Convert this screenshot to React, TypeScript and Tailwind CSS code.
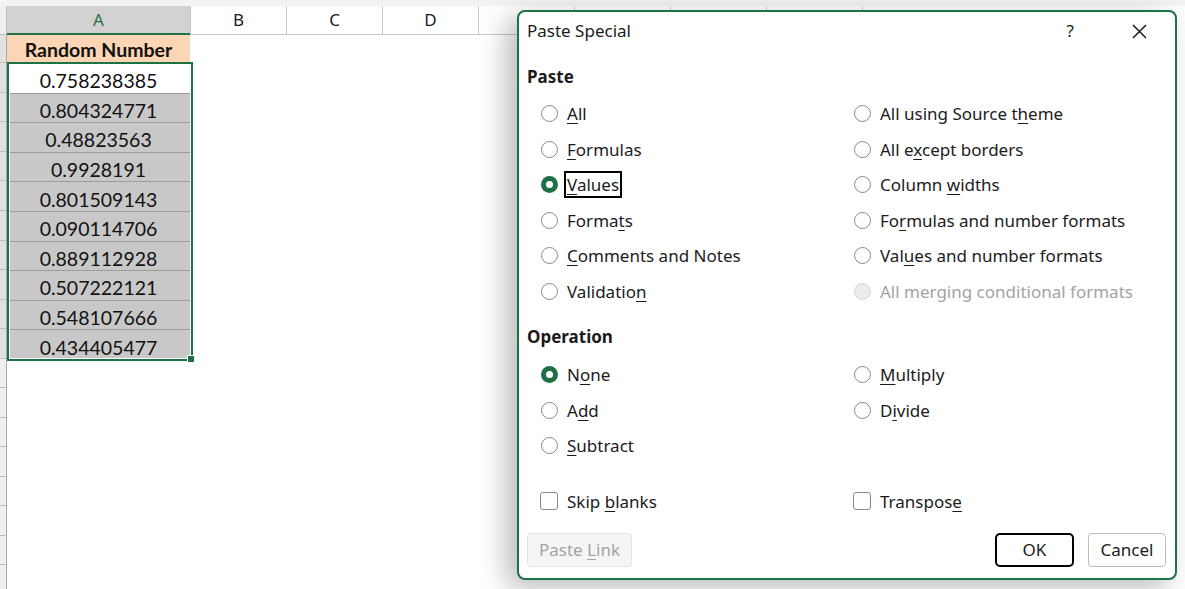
import React from 'react';

const values = [
  '0.758238385',
  '0.804324771',
  '0.48823563',
  '0.9928191',
  '0.801509143',
  '0.090114706',
  '0.889112928',
  '0.507222121',
  '0.548107666',
  '0.434405477',
];

interface Opt {
  label: string;
  at?: number;
  checked?: boolean;
  disabled?: boolean;
  focused?: boolean;
}

const pasteLeft: Opt[] = [
  { label: 'All', at: 0 },
  { label: 'Formulas', at: 0 },
  { label: 'Values', at: 0, checked: true, focused: true },
  { label: 'Formats', at: 5 },
  { label: 'Comments and Notes', at: 0 },
  { label: 'Validation', at: 9 },
];

const pasteRight: Opt[] = [
  { label: 'All using Source theme', at: 18 },
  { label: 'All except borders', at: 5 },
  { label: 'Column widths', at: 7 },
  { label: 'Formulas and number formats', at: 2 },
  { label: 'Values and number formats', at: 3 },
  { label: 'All merging conditional formats', disabled: true },
];

const opLeft: Opt[] = [
  { label: 'None', at: 1, checked: true },
  { label: 'Add', at: 1 },
  { label: 'Subtract', at: 0 },
];

const opRight: Opt[] = [
  { label: 'Multiply', at: 0 },
  { label: 'Divide', at: 1 },
];

// underline the access key letter, like a Windows dialog
function Accel({ text, at }: { text: string; at?: number }) {
  if (at === undefined) return <span>{text}</span>;
  return (
    <span className="whitespace-pre">
      {text.slice(0, at)}
      <span className="underline underline-offset-[3px] decoration-1">{text[at]}</span>
      {text.slice(at + 1)}
    </span>
  );
}

function Radio({ checked, disabled }: { checked?: boolean; disabled?: boolean }) {
  if (checked) {
    return (
      <span className="w-[17px] h-[17px] rounded-full bg-[#1e7145] flex items-center justify-center shrink-0">
        <span className="w-[7px] h-[7px] rounded-full bg-white" />
      </span>
    );
  }
  return (
    <span
      className={
        disabled
          ? 'w-[17px] h-[17px] rounded-full border border-[#d4d4d4] bg-[#ececec] shrink-0'
          : 'w-[17px] h-[17px] rounded-full border border-[#8a8a8a] bg-white shrink-0'
      }
    />
  );
}

function RadioRow({ opt }: { opt: Opt }) {
  return (
    <div className="flex items-center h-[35.5px] gap-[9px]">
      <Radio checked={opt.checked} disabled={opt.disabled} />
      <span
        className={
          (opt.disabled ? 'text-[#a3a3a3]' : 'text-[#1b1b1b]') +
          (opt.focused ? ' outline-2 outline-black px-[1px] leading-[23px] -ml-[1px]' : '')
        }
      >
        <Accel text={opt.label} at={opt.at} />
      </span>
    </div>
  );
}

function Check({ label, at }: { label: string; at: number }) {
  return (
    <div className="flex items-center h-[35.5px] gap-[9px] -ml-[1px]">
      <span className="w-[18px] h-[18px] rounded-[3px] border border-[#8a8a8a] bg-white" />
      <span className="text-[#1b1b1b]">
        <Accel text={label} at={at} />
      </span>
    </div>
  );
}

function Dialog() {
  return (
    <div className="absolute left-[517px] top-[10px] w-[660px] h-[570px] rounded-[8px] border-2 border-[#1e7145] bg-white shadow-[-10px_8px_28px_rgba(0,0,0,0.28)] font-['Noto_Sans',sans-serif] text-[17px] flex flex-col">
      <div className="flex items-center h-[38px] pl-[8px] pr-[28px] text-[#1b1b1b]">
        <span>Paste Special</span>
        <span className="ml-auto mr-[58px]">?</span>
        <svg width="15" height="15" viewBox="0 0 15 15" className="text-[#1b1b1b]">
          <path d="M1 1L14 14M14 1L1 14" stroke="currentColor" strokeWidth="1.5" />
        </svg>
      </div>

      <div className="mt-[12px] h-[30px] pl-[8px] flex items-center font-bold text-[#1b1b1b]">Paste</div>
      <div className="flex mt-[4px] pl-[22px]">
        <div className="w-[313px] flex flex-col">
          {pasteLeft.map((o) => (
            <RadioRow key={o.label} opt={o} />
          ))}
        </div>
        <div className="flex flex-col">
          {pasteRight.map((o) => (
            <RadioRow key={o.label} opt={o} />
          ))}
        </div>
      </div>

      <div className="mt-[13px] h-[30px] pl-[8px] flex items-center font-bold text-[#1b1b1b]">Operation</div>
      <div className="flex mt-[5px] pl-[22px]">
        <div className="w-[313px] flex flex-col">
          {opLeft.map((o) => (
            <RadioRow key={o.label} opt={o} />
          ))}
        </div>
        <div className="flex flex-col">
          {opRight.map((o) => (
            <RadioRow key={o.label} opt={o} />
          ))}
        </div>
      </div>

      <div className="flex mt-[20px] pl-[22px]">
        <div className="w-[313px]">
          <Check label="Skip blanks" at={5} />
        </div>
        <Check label="Transpose" at={8} />
      </div>

      <div className="flex items-center mt-[14px] pl-[8px] pr-[9px]">
        <div className="w-[105px] h-[34px] rounded-[4px] border border-[#e3e3e3] bg-[#f5f5f5] text-[#a3a3a3] flex items-center justify-center">
          <Accel text="Paste Link" at={6} />
        </div>
        <div className="ml-auto w-[79px] h-[34px] rounded-[5px] border-2 border-black bg-white text-[#1b1b1b] flex items-center justify-center">
          OK
        </div>
        <div className="ml-[14px] w-[78px] h-[34px] rounded-[4px] border border-[#bdbdbd] bg-white text-[#1b1b1b] flex items-center justify-center">
          Cancel
        </div>
      </div>
    </div>
  );
}

export default function App() {
  const extraRows = Array.from({ length: 8 });
  return (
    <div className="relative w-[1185px] h-[589px] overflow-hidden bg-white">
      <div className="h-[6px] bg-[#f3f3f3]" />

      {/* column headers */}
      <div className="flex h-[29px] font-['Noto_Sans',sans-serif] text-[17px] text-[#1b1b1b]">
        <div className="w-[7px] bg-[#f0f0f0] border-r border-b border-[#bdbdbd]" />
        <div className="w-[183px] bg-[#d2d2d2] border-b-2 border-[#1e7145] text-[#1e7145] flex items-center justify-center">
          A
        </div>
        {['B', 'C', 'D', '', '', '', '', ''].map((c, i) => (
          <div
            key={i}
            className="w-[96px] shrink-0 border-l border-b border-[#c8c8c8] flex items-center justify-center"
          >
            {c}
          </div>
        ))}
      </div>

      {/* grid body */}
      <div className="flex font-['Lato',sans-serif] text-[19.5px] text-[#111]">
        <div className="w-[7px] flex flex-col border-r border-[#a8a8a8]">
          <div className="h-[28px] bg-[#e2e2e2] border-b border-[#bdbdbd]" />
          {values.map((v) => (
            <div key={v} className="h-[29.6px] bg-[#e2e2e2] border-b border-[#bdbdbd]" />
          ))}
          {extraRows.map((_, i) => (
            <div key={i} className="h-[29.5px] bg-[#f0f0f0] border-b border-[#bdbdbd]" />
          ))}
        </div>
        <div className="w-[183px] flex flex-col">
          <div className="h-[28px] pt-[2px] bg-[#fcd5b4] font-bold flex items-center justify-center">Random Number</div>
          {values.map((v, i) => (
            <div
              key={v}
              className={
                i === 0
                  ? 'h-[29.6px] pt-[5px] bg-white flex items-center justify-center'
                  : 'h-[29.6px] pt-[5px] bg-[#c8c8c8] border-t border-[#9c9c9c] flex items-center justify-center'
              }
            >
              {v}
            </div>
          ))}
        </div>
      </div>

      {/* selection */}
      <div className="absolute left-[7px] top-[62px] w-[186px] h-[299px] border-2 border-[#1e7145] shadow-[inset_0_0_0_1px_white]" />
      <div className="absolute left-[187px] top-[355px] w-[8px] h-[8px] bg-[#1e7145] border border-white" />

      <Dialog />
    </div>
  );
}
